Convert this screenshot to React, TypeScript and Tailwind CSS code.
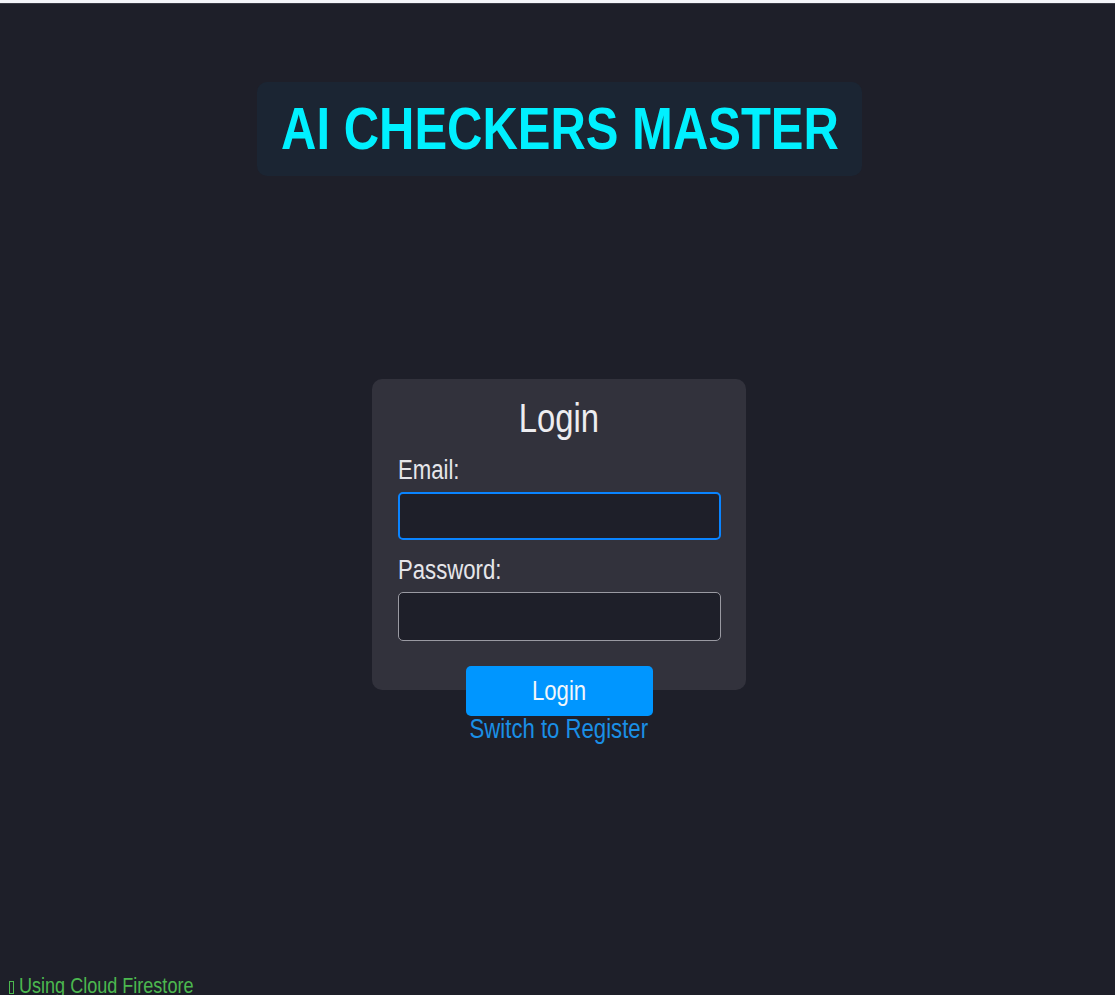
import type { ReactNode } from "react";

// the reference text is horizontally condensed; squeeze Liberation Sans to match
const Narrow = ({ children, left, wide }: { children: ReactNode; left?: boolean; wide?: boolean }) => (
  <span
    className={`inline-block whitespace-nowrap ${wide ? "scale-x-[0.83]" : "scale-x-[0.82]"} ${
      left ? "origin-left" : "origin-center"
    }`}
  >
    {children}
  </span>
);

export default function App() {
  return (
    <div className="min-h-screen bg-[#1e1f29] font-['Liberation_Sans',Arial,sans-serif] text-[#e8e8ec]">
      <div className="h-[4px] border-b border-[#3b3c46] bg-[#f3f5f9]" />

      <header className="mt-[78px] flex justify-center pl-[4px]">
        <div className="flex h-[94px] w-[605px] items-center justify-center rounded-[10px] bg-[#1b2533]">
          <h1 className="text-[59px] font-bold leading-none text-[#00f0ff]">
            <Narrow wide>AI CHECKERS MASTER</Narrow>
          </h1>
        </div>
      </header>

      <main className="mt-[203px] flex justify-center pl-[2px]">
        <form
          className="h-[311px] w-[374px] rounded-[10px] bg-[#32323c] pl-[26px] pr-[25px] pt-[19px]"
          onSubmit={(e) => e.preventDefault()}
        >
          <h2 className="text-center text-[40px] leading-none text-[#ededf0]">
            <Narrow>Login</Narrow>
          </h2>

          <label className="mt-[17px] block text-[27px] leading-[31px] text-[#e6e6ea]">
            <Narrow left>Email:</Narrow>
          </label>
          <input
            type="email"
            className="mt-[6px] block h-[48px] w-full rounded-[5px] border-2 border-[#0a84ff] bg-[#1e1f29] px-2 text-[20px] text-white outline-none"
          />

          <label className="mt-[15px] block text-[27px] leading-[31px] text-[#e6e6ea]">
            <Narrow left>Password:</Narrow>
          </label>
          <input
            type="password"
            className="mt-[6px] block h-[49px] w-full rounded-[5px] border border-[#9a9aa2] bg-[#1e1f29] px-2 text-[20px] text-white outline-none"
          />

          <div className="mt-[25px] flex flex-col items-center">
            <button
              type="submit"
              className="h-[50px] w-[187px] rounded-[5px] bg-[#0096ff] text-[27px] leading-none text-[#f2f6fa]"
            >
              <Narrow>Login</Narrow>
            </button>
            <button type="button" className="text-[27px] leading-none text-[#1a8fe6]">
              <Narrow>Switch to Register</Narrow>
            </button>
          </div>
        </form>
      </main>

      <footer className="mt-[283px] flex items-center pl-[9px] text-[22px] leading-[25px] text-[#4cb84f]">
        <span className="mr-[5px] mt-[3px] inline-block h-[13px] w-[5px] border border-[#4cb84f]" />
        <Narrow left>Using Cloud Firestore</Narrow>
      </footer>
    </div>
  );
}
